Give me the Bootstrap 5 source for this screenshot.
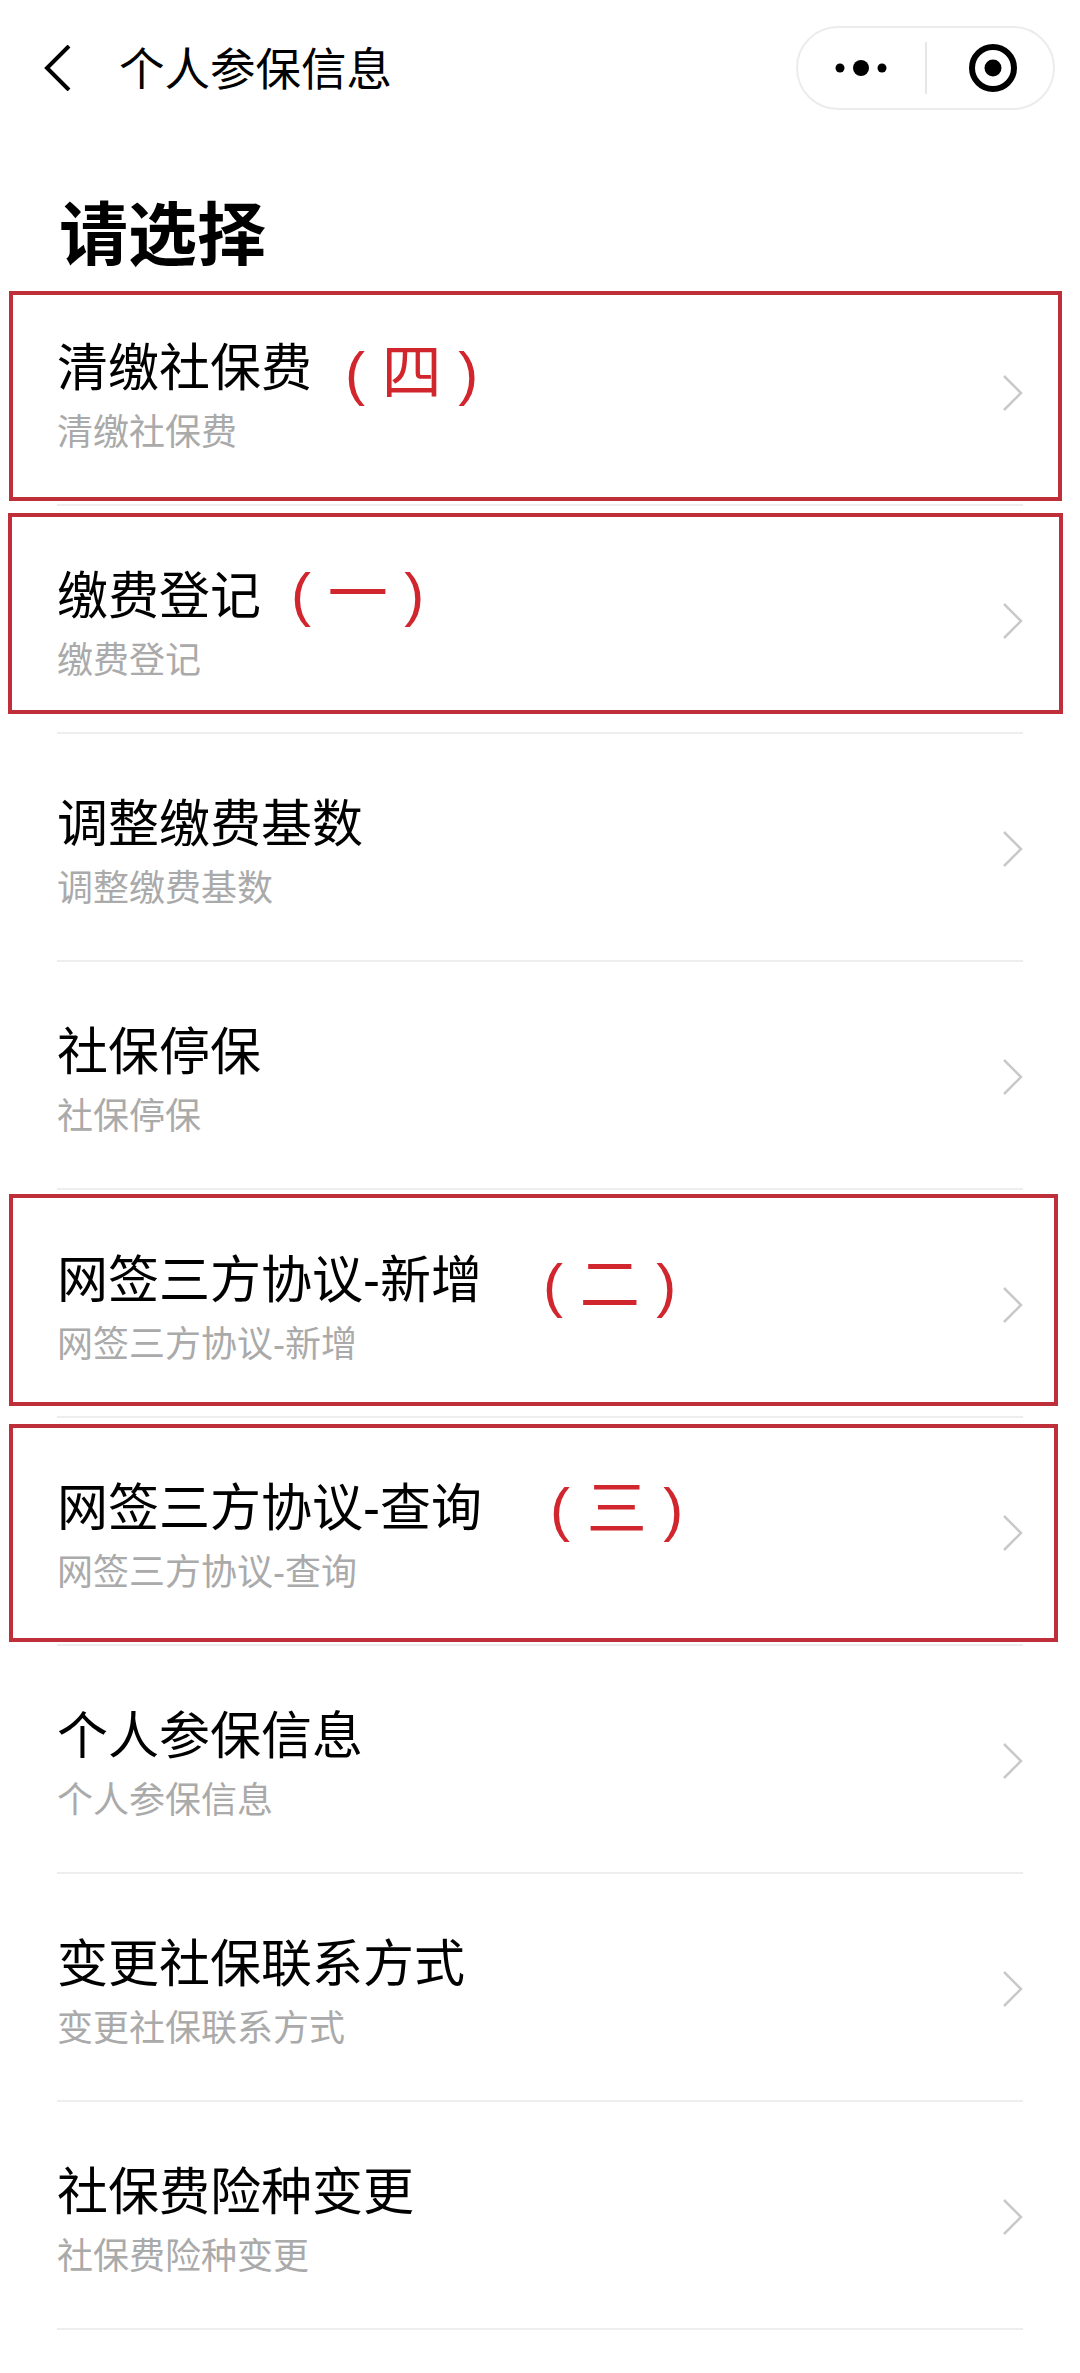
<!DOCTYPE html>
<html lang="zh-CN">
<head>
  <meta charset="UTF-8" />
  <meta name="viewport" content="width=device-width, initial-scale=1.0" />
  <title>个人参保信息</title>
  <link rel="stylesheet" href="https://cdn.jsdelivr.net/npm/bootstrap@5.3.0/dist/css/bootstrap.min.css">
  <style>
    body {
      font-family: "Liberation Sans", "Noto Sans CJK SC", sans-serif;
      color: #000;
      background: #fff;
    }
    .page-wrap { position: relative; width: 1080px; height: 2373px; overflow: hidden; }

    /* top bar */
    .top-bar { height: 136px; padding: 0 25px 0 44px; }
    .back-btn { width: 28px; height: 46px; margin-right: 47px; }
    .top-title { font-size: 45.5px; line-height: 60px; padding-top: 5px; }
    .capsule {
      width: 259px; height: 84px; border: 2px solid #ececec; border-radius: 42px;
    }
    .capsule-half { width: 126.5px; height: 100%; }
    .capsule-right { padding-left: 7px; }
    .capsule-line { width: 2px; height: 52px; background: #e6e6e6; }

    /* heading */
    .pick-title {
      font-size: 69px; line-height: 88px; font-weight: 700;
      margin: 57px 0 -3px 59px;
    }

    /* rows */
    .menu-list { margin: 0 57px; border-radius: 0; }
    .menu-list.list-group-flush > .list-group-item {
      height: 228px; padding: 0; background: transparent; color: #000;
      border-color: #eeeeee; border-width: 0 0 2px;
    }
    .menu-text { padding-top: 14px; }
    .menu-title { font-size: 51px; line-height: 60px; }
    .menu-sub { font-size: 36px; line-height: 50px; margin-top: 9px; color: #aaaaaa; }
    .row-arrow { width: 20px; height: 36px; margin-top: 4px; }

    /* red notes drawn over the screenshot */
    .note {
      color: #d1262d; font-size: 60px; line-height: 60px; white-space: pre;
    }
    .note-1 { margin-left: 33px; margin-top: 5px; margin-bottom: -5px; }
    .note-2 { margin-left: 30px; margin-top: -2px; margin-bottom: 2px; }
    .note-3 { margin-left: 61px; margin-top: 5px; margin-bottom: -5px; }
    .note-4 { margin-left: 68px; margin-top: 1px; margin-bottom: -1px; }
    .red-box { position: absolute; border: 4px solid #bf2f39; }
    .box-1 { left: 9px; top: 291px; width: 1053px; height: 210px; }
    .box-2 { left: 8px; top: 513px; width: 1055px; height: 201px; }
    .box-3 { left: 9px; top: 1194px; width: 1049px; height: 212px; }
    .box-4 { left: 9px; top: 1424px; width: 1049px; height: 218px; }
  </style>
</head>
<body>
  <div class="page-wrap">
    <!-- top bar -->
    <div class="top-bar d-flex align-items-center">
      <svg class="back-btn flex-shrink-0" viewBox="0 0 28 46" fill="none" stroke="#000" stroke-width="4">
        <path d="M25 1 L3 23 L25 45" />
      </svg>
      <div class="top-title flex-grow-1">个人参保信息</div>
      <div class="capsule d-flex align-items-center flex-shrink-0">
        <div class="capsule-half d-flex align-items-center justify-content-center">
          <svg width="64" height="20" viewBox="0 0 64 20" fill="#000">
            <circle cx="11" cy="10" r="4.5" />
            <circle cx="32" cy="10" r="8" />
            <circle cx="53" cy="10" r="4.5" />
          </svg>
        </div>
        <div class="capsule-line"></div>
        <div class="capsule-half capsule-right d-flex align-items-center justify-content-center">
          <svg width="48" height="48" viewBox="0 0 48 48" fill="none">
            <circle cx="24" cy="24" r="21" stroke="#000" stroke-width="6" />
            <circle cx="24" cy="24" r="8.5" fill="#000" />
          </svg>
        </div>
      </div>
    </div>

    <div class="pick-title">请选择</div>

    <div id="menuList" class="menu-list list-group list-group-flush"></div>

    <!-- red boxes -->
    <div class="red-box box-1"></div>
    <div class="red-box box-2"></div>
    <div class="red-box box-3"></div>
    <div class="red-box box-4"></div>
  </div>

  <script>
    const menuItems = [
      { name: "清缴社保费", note: "( 四 )", noteClass: "note-1" },
      { name: "缴费登记", note: "( 一 )", noteClass: "note-2" },
      { name: "调整缴费基数" },
      { name: "社保停保" },
      { name: "网签三方协议-新增", note: "( 二 )", noteClass: "note-3" },
      { name: "网签三方协议-查询", note: "( 三 )", noteClass: "note-4" },
      { name: "个人参保信息" },
      { name: "变更社保联系方式" },
      { name: "社保费险种变更" }
    ];

    const list = document.getElementById("menuList");
    menuItems.forEach(item => {
      const li = document.createElement("div");
      li.className = "list-group-item d-flex align-items-center justify-content-between";
      const note = item.note ? `<span class="note ${item.noteClass}">${item.note}</span>` : "";
      li.innerHTML = `
        <div class="menu-text">
          <div class="d-flex align-items-center">
            <span class="menu-title">${item.name}</span>${note}
          </div>
          <div class="menu-sub">${item.name}</div>
        </div>
        <svg class="row-arrow flex-shrink-0" viewBox="0 0 20 36" fill="none" stroke="#c9c9c9" stroke-width="2.5">
          <path d="M1 1 L18 18 L1 35" />
        </svg>`;
      list.appendChild(li);
    });
  </script>
  <script src="https://cdn.jsdelivr.net/npm/bootstrap@5.3.0/dist/js/bootstrap.bundle.min.js"></script>
</body>
</html>
